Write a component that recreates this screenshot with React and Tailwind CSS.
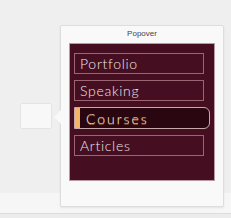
import React from "react";

const items = [
  { label: "Portfolio" },
  { label: "Speaking" },
  { label: "Courses", active: true },
  { label: "Articles" },
];

const NavItem = ({ label, active }) => {
  if (active) {
    return (
      <div className="flex h-[22px] w-[136px] items-stretch overflow-hidden rounded-r-[6px] border border-[#c7a9ad] bg-[#2a0710]">
        <div className="w-[5px] bg-[#f6b565]" />
        <span
          className="flex items-center pl-[6px] text-[14px] font-light tracking-[0.14em] text-[#eee2dc]"
          style={{ textShadow: "0 1px 0 rgba(200,120,60,0.8)" }}
        >
          {label}
        </span>
      </div>
    );
  }
  return (
    <div className="flex h-[21px] w-[130px] items-center border border-[#9b6574] pl-[5px] text-[14px] font-light tracking-[0.05em] text-[#f1e6ea]">
      {label}
    </div>
  );
};

export default function App() {
  return (
    <div className="relative flex h-[218px] w-[231px] flex-col overflow-hidden bg-[#efefef] font-['Lato','Open_Sans',sans-serif]">
      {/* canvas with anchor */}
      <div className="flex-1 pl-[20px] pt-[103px]">
        <div className="h-[26px] w-[32px] rounded-[2px] border border-[#e4e4e4] bg-[#f8f8f8]" />
      </div>

      {/* bottom bar */}
      <div className="h-[20px] bg-[#f6f6f6]" />
      <div className="h-[5px] border-t border-[#dcdcdc] bg-[#ececec]" />

      {/* popover */}
      <div className="absolute left-[60px] top-[25px] flex h-[182px] w-[164px] flex-col rounded-[2px] border border-[#dddddd] bg-[#f9f9f9] shadow-[0_1px_2px_rgba(0,0,0,0.08)]">
        <div className="absolute left-[-7px] top-[84px] h-0 w-0 border-y-[7px] border-r-[7px] border-y-transparent border-r-[#f9f9f9]" />
        <div className="pt-[3px] text-center font-['Liberation_Sans',sans-serif] text-[8px] leading-[10px] text-[#444]">
          Popover
        </div>
        <div className="ml-[8px] mt-[4px] flex h-[138px] w-[146px] flex-col gap-[6px] border border-[#b99aa2] bg-[#450e21] pl-[4px] pt-[9px]">
          {items.map((it) => (
            <NavItem key={it.label} {...it} />
          ))}
        </div>
      </div>
    </div>
  );
}
